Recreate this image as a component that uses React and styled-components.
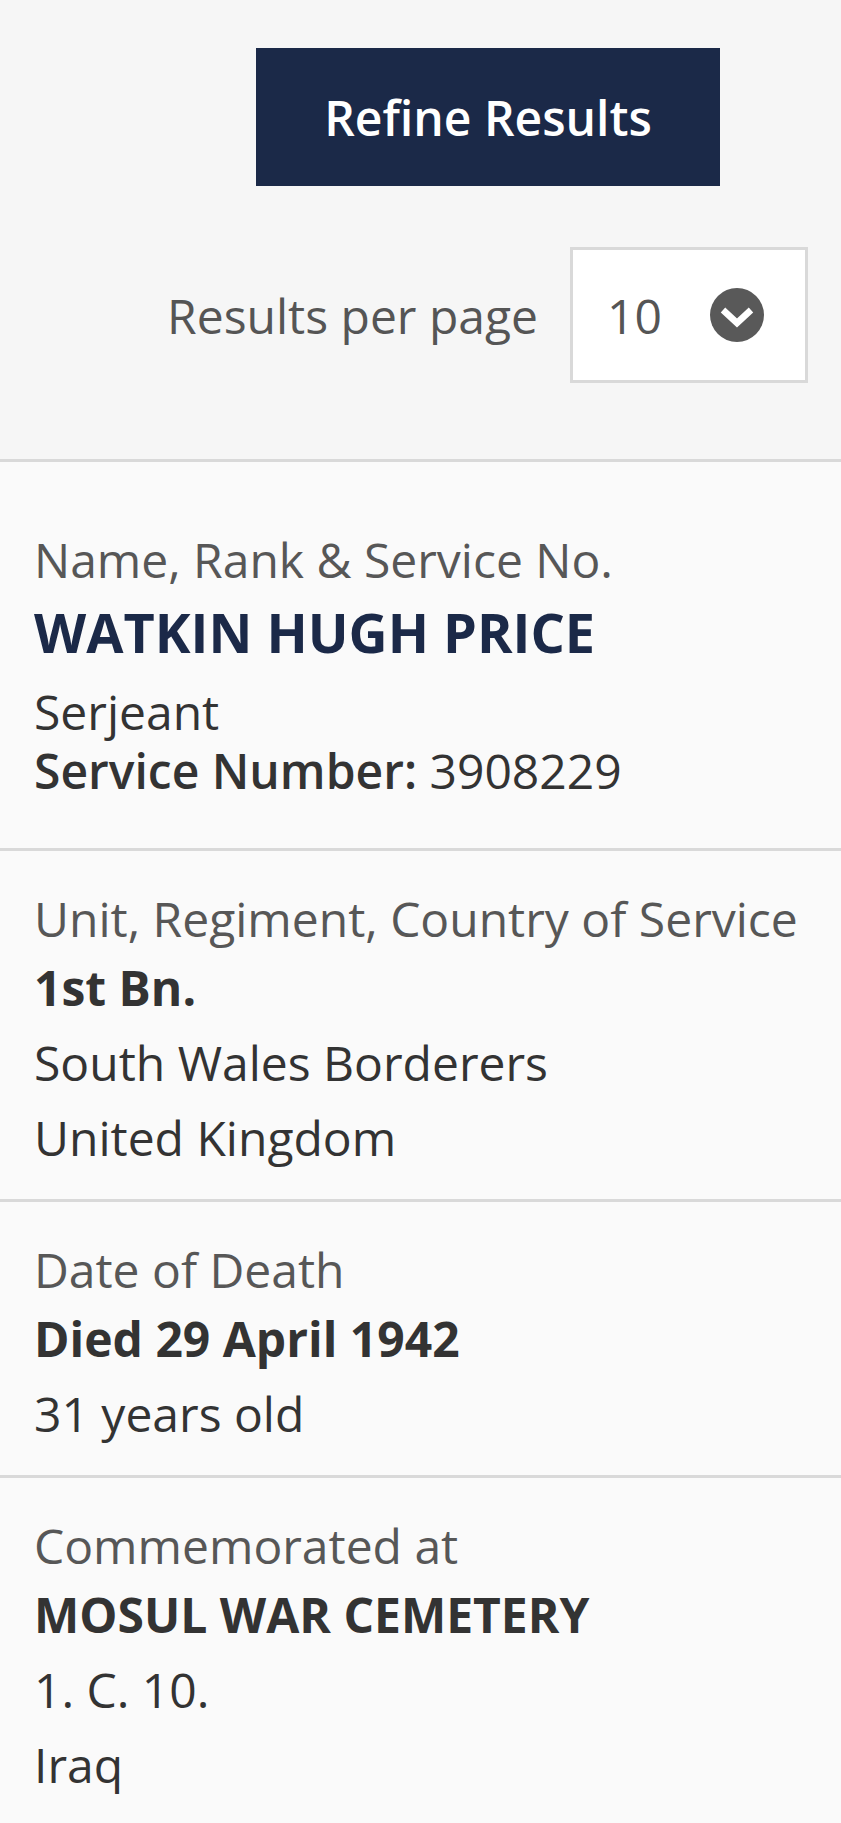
import React from "react";
import styled, { createGlobalStyle } from "styled-components";

const GlobalStyle = createGlobalStyle`
  body {
    margin: 0;
    overflow: hidden;
    background: #fafafa;
  }
`;

const Page = styled.div`
  font-family: "Open Sans", "Liberation Sans", sans-serif;
  background: #fafafa;
  min-height: 100vh;
`;

const Toolbar = styled.div`
  display: flex;
  flex-direction: column;
  align-items: flex-end;
  gap: 61px;
  padding: 48px 33px 76px 0;
  background: #f6f6f6;
  border-bottom: 3px solid #d9d9d9;
`;

const RefineButton = styled.button`
  width: 464px;
  height: 138px;
  margin-right: 88px;
  border: none;
  background: #1b2948;
  color: #fff;
  font-family: inherit;
  font-size: 48px;
  font-weight: 600;
  line-height: 59px;
  cursor: pointer;
`;

const PerPage = styled.div`
  display: flex;
  align-items: center;
  gap: 32px;
  color: #555;
  font-size: 48px;
  line-height: 59px;
`;

const Select = styled.div`
  box-sizing: border-box;
  width: 238px;
  height: 136px;
  display: flex;
  align-items: center;
  justify-content: space-between;
  padding: 0 41px 0 34px;
  background: #fff;
  border: 3px solid #d9d9d9;
  color: #555;
`;

const Chevron = () => (
  <svg width="54" height="54" viewBox="0 0 54 54">
    <circle cx="27" cy="27" r="27" fill="#595959" />
    <polyline
      points="13,22 27,35 41,22"
      fill="none"
      stroke="#fff"
      strokeWidth="6.5"
    />
  </svg>
);

const Section = styled.section`
  padding: ${(p) => (p.first ? "68px 32px 48px 34px" : "38px 32px 32px 34px")};
  border-bottom: ${(p) => (p.last ? "none" : "3px solid #d9d9d9")};
`;

const Label = styled.div`
  margin-bottom: 10px;
  color: #575757;
  font-size: 48px;
  line-height: 59px;
`;

const Name = styled.div`
  margin: 4px 0 17px;
  color: #1b2948;
  font-size: 54px;
  font-weight: 700;
  line-height: 66px;
`;

const Value = styled.div`
  color: #333;
  font-size: 48px;
  font-weight: ${(p) => (p.bold ? 700 : 400)};
  line-height: 59px;

  & + & {
    margin-top: 16px;
  }
`;

const Strong = styled.span`
  font-weight: 600;
`;

export default function App() {
  return (
    <Page>
      <GlobalStyle />
      <Toolbar>
        <RefineButton>Refine Results</RefineButton>
        <PerPage>
          <span>Results per page</span>
          <Select>
            <span>10</span>
            <Chevron />
          </Select>
        </PerPage>
      </Toolbar>

      <Section first>
        <Label>Name, Rank &amp; Service No.</Label>
        <Name>WATKIN HUGH PRICE</Name>
        <Value>
          Serjeant
          <br />
          <Strong>Service Number:</Strong> 3908229
        </Value>
      </Section>

      <Section>
        <Label>Unit, Regiment, Country of Service</Label>
        <Value bold>1st Bn.</Value>
        <Value>South Wales Borderers</Value>
        <Value>United Kingdom</Value>
      </Section>

      <Section>
        <Label>Date of Death</Label>
        <Value bold>Died 29 April 1942</Value>
        <Value>31 years old</Value>
      </Section>

      <Section last>
        <Label>Commemorated at</Label>
        <Value bold>MOSUL WAR CEMETERY</Value>
        <Value>1. C. 10.</Value>
        <Value>Iraq</Value>
      </Section>
    </Page>
  );
}
